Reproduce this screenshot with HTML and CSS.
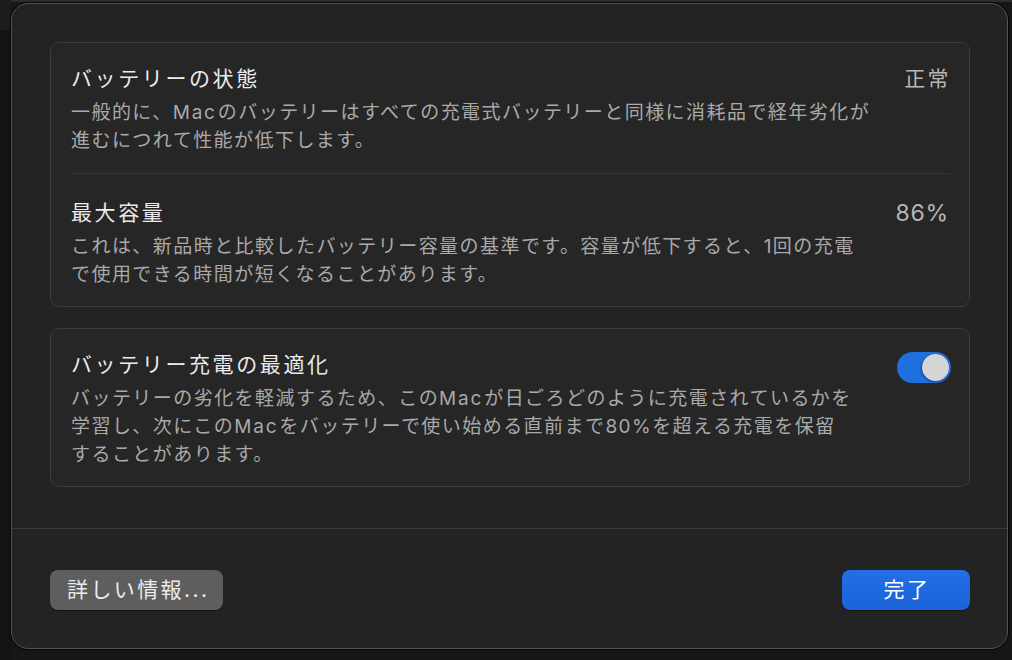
FILE: index.html
```html
<!DOCTYPE html>
<html lang="ja">
<head>
<meta charset="utf-8">
<title>バッテリーの状態</title>
<link rel="stylesheet" href="styles.css">
</head>
<body>
<div class="backdrop"></div>
<div class="window">
  <div class="content">
    <section class="card">
      <div class="row row-first">
        <div class="text">
          <div class="title">バッテリーの状態</div>
          <div class="desc">一般的に、<span class="latin">Mac</span>のバッテリーはすべての充電式バッテリーと同様に消耗品で経年劣化が<br>進むにつれて性能が低下します。</div>
        </div>
        <div class="value">正常</div>
      </div>
      <div class="divider"></div>
      <div class="row row-second">
        <div class="text">
          <div class="title">最大容量</div>
          <div class="desc">これは、新品時と比較したバッテリー容量の基準です。容量が低下すると、1回の充電<br>で使用できる時間が短くなることがあります。</div>
        </div>
        <div class="value value-num">86%</div>
      </div>
    </section>
    <section class="card">
      <div class="row row-first">
        <div class="text">
          <div class="title">バッテリー充電の最適化</div>
          <div class="desc">バッテリーの劣化を軽減するため、この<span class="latin">Mac</span>が日ごろどのように充電されているかを<br>学習し、次にこの<span class="latin">Mac</span>をバッテリーで使い始める直前まで80%を超える充電を保留<br>することがあります。</div>
        </div>
        <div class="toggle"><div class="knob"></div></div>
      </div>
    </section>
  </div>
  <div class="separator"></div>
  <div class="footer">
    <button class="btn btn-secondary">詳しい情報...</button>
    <button class="btn btn-primary">完了</button>
  </div>
</div>
</body>
</html>
```
FILE: styles.css
```css
html, body {
  margin: 0;
  padding: 0;
}
body {
  width: 1012px;
  height: 660px;
  overflow: hidden;
  background: linear-gradient(#2c2c2c 0, #2c2c2c 2px, #161616 2px);
  font-family: "Inter", "Noto Sans CJK JP", sans-serif;
  position: relative;
  box-sizing: border-box;
  padding: 3px 4px 0 11px;
}
.backdrop {
  position: absolute;
  left: 0;
  top: 0;
  width: 11px;
  height: 660px;
  background: linear-gradient(#1c1c1c 0, #1c1c1c 30px, #131313 30px);
}

.window {
  position: relative;
  width: 997px;
  height: 646px;
  box-sizing: border-box;
  background: #232323;
  border: 1px solid #545454;
  border-radius: 17px;
  box-shadow: 0 0 0 1px #050505;
  display: flex;
  flex-direction: column;
}
.content {
  padding: 38px 37px 41px 38px;
  display: flex;
  flex-direction: column;
  gap: 21px;
}
.card {
  background: #262626;
  border: 1px solid #3b3b3b;
  border-radius: 9px;
  display: flex;
  flex-direction: column;
}
.row {
  display: flex;
  align-items: flex-start;
  padding: 21px 20px 17px 20px;
}
.row-first {
  padding-bottom: 18px;
}
.card:last-child .row-first {
  padding-bottom: 17px;
}
.row-second {
  padding-top: 24px;
}
.text {
  flex: 1;
}
.title {
  font-size: 21px;
  letter-spacing: 2.6px;
  line-height: 30px;
  color: #ebebeb;
}
.desc {
  margin-top: 5px;
  font-size: 19px;
  letter-spacing: 1.45px;
  line-height: 28px;
  color: #a9a9a9;
}
.latin {
  letter-spacing: 1.8px;
  margin-right: 1px;
}
.value {
  font-size: 21px;
  letter-spacing: 2.4px;
  line-height: 30px;
  color: #b6b6b6;
  margin-right: -2px;
}
.value-num {
  font-size: 23px;
  letter-spacing: 0.8px;
  margin-right: 0;
}
.divider {
  height: 1px;
  background: #363636;
  margin: 0 19px 0 20px;
}
.toggle {
  width: 54px;
  height: 31px;
  margin-top: 2px;
  margin-right: -2px;
  border-radius: 16px;
  background: #1f6fde;
  box-sizing: border-box;
  display: flex;
  align-items: center;
  justify-content: flex-end;
  padding-right: 2px;
}
.knob {
  width: 27px;
  height: 27px;
  border-radius: 50%;
  background: #d5d5d5;
  box-shadow: -1px 1px 2px rgba(0, 0, 0, 0.35);
}
.separator {
  height: 1px;
  background: #3a3a3a;
}
.footer {
  display: flex;
  justify-content: space-between;
  align-items: center;
  padding: 41px 37px 0 38px;
}
.btn {
  height: 40px;
  border: none;
  border-radius: 8px;
  font-family: "Inter", "Noto Sans CJK JP", sans-serif;
  font-size: 21px;
  letter-spacing: 2.4px;
  line-height: 40px;
  padding: 0 14px 0 17px;
  color: #ececec;
  box-shadow: 0 1px 1px rgba(0, 0, 0, 0.5);
}
.btn-secondary {
  background: #5e5e5e;
}
.btn-primary {
  width: 128px;
  padding: 0 0 0 2px;
  background: linear-gradient(#236fe4, #1a63d8);
  color: #ffffff;
}
```
